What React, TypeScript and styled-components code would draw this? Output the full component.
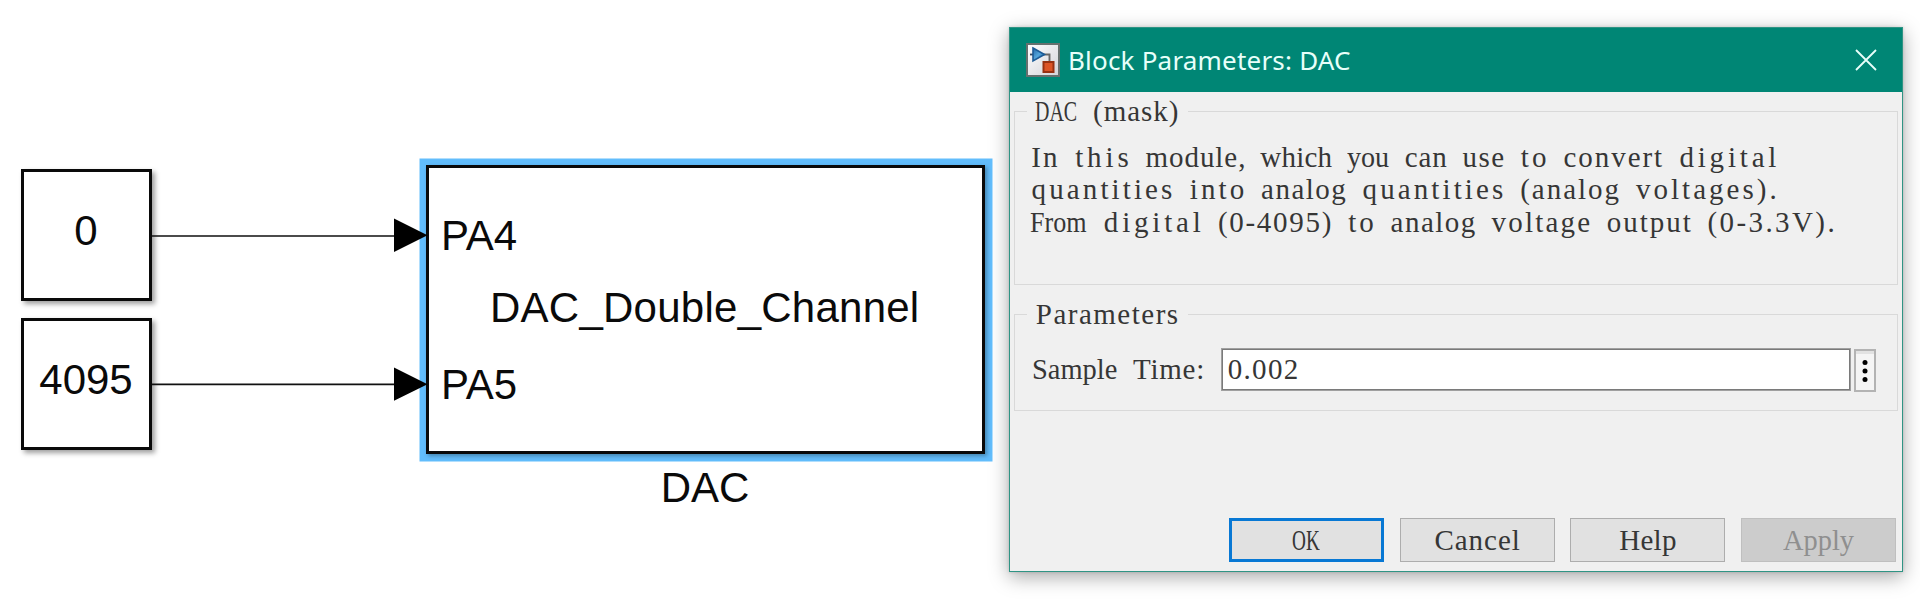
import React from "react";
import styled, { createGlobalStyle } from "styled-components";

const GlobalStyle = createGlobalStyle`
  * { box-sizing: border-box; }
  body { margin: 0; background: #fff; overflow: hidden; }
`;

const SANS = '"Liberation Sans", Arial, sans-serif';
const SERIF = '"Liberation Serif", "Times New Roman", serif';
const CELL = 14.39;
const DIALOG_FONT_SIZE = 29;

/* ---------- text set in equal cells per word ---------- */

const context = document.createElement("canvas").getContext("2d")!;

// Narrow words are spread over their cells, wide ones are condensed into them.
function fitToCells(word: string): React.CSSProperties {
  context.font = `${DIALOG_FONT_SIZE}px ${SERIF}`;
  const natural = context.measureText(word).width;
  const target = word.length * CELL;
  if (natural > target) {
    return { display: "inline-block", width: target, transform: `scaleX(${(target - 1) / natural})` };
  }
  const spacing = (target - natural) / word.length;
  return { letterSpacing: spacing, paddingLeft: spacing / 2, marginRight: -spacing / 2 };
}

const CellLine = styled.span`
  display: block;
  white-space: pre;
  font-family: ${SERIF};
  font-size: ${DIALOG_FONT_SIZE}px;
  word-spacing: ${CELL - DIALOG_FONT_SIZE * 0.25}px;
`;

const Word = styled.span`
  transform-origin: left center;
`;

function CellText({ children }: { children: string }) {
  const words = children.split(" ");
  return (
    <CellLine>
      {words.map((word, i) => (
        <React.Fragment key={i}>
          {i > 0 && " "}
          <Word style={fitToCells(word)}>{word}</Word>
        </React.Fragment>
      ))}
    </CellLine>
  );
}

/* ---------- page ---------- */

const Page = styled.main`
  display: flex;
  width: 1920px;
  height: 605px;
  background: #fff;
`;

const Canvas = styled.section`
  position: relative;
  flex: 0 0 1009px;
  font-family: ${SANS};
  font-size: 42px;
  color: #0a0a0a;
`;

const Block = styled.div<{ $x: number; $y: number; $w: number; $h: number; $selected?: boolean }>`
  position: absolute;
  left: ${(p) => p.$x}px;
  top: ${(p) => p.$y}px;
  width: ${(p) => p.$w}px;
  height: ${(p) => p.$h}px;
  border: 3px solid #0a0a0a;
  background: #fff;
  box-shadow: ${(p) =>
    p.$selected
      ? "2px 2px 4px rgba(0,0,0,.3), 0.5px 0.5px 0 7px #62bdfc"
      : "3px 3px 5px rgba(0,0,0,.38)"};
`;

const ConstantBlock = styled(Block)`
  display: flex;
  align-items: center;
  justify-content: center;
  padding: 0 1px 8px 0;
`;

const DacBody = styled(Block)`
  display: flex;
  flex-direction: column;
  padding: 44px 13px 0 12px;
  line-height: 48px;
`;

const PortName = styled.div`
  letter-spacing: -0.1px;
`;

const MaskText = styled.div`
  margin: 24px 0 29px;
  padding-left: 49px;
  letter-spacing: 0.25px;
  white-space: nowrap;
`;

const BlockName = styled.div`
  position: absolute;
  left: 426px;
  top: 464px;
  width: 558px;
  text-align: center;
  line-height: 48px;
`;

const Wires = styled.svg`
  position: absolute;
  left: 0;
  top: 0;
`;

/* ---------- dialog ---------- */

const Dialog = styled.section`
  display: flex;
  flex-direction: column;
  flex: 0 0 894px;
  height: 545px;
  margin-top: 27px;
  border: 1.5px solid #2f9484;
  background: #f0f0f0;
  color: #363636;
  box-shadow: 0 5px 18px rgba(0, 0, 0, 0.34), 0 0 3px rgba(0, 0, 0, 0.15);
`;

const TitleBar = styled.header`
  display: flex;
  align-items: center;
  flex: 0 0 64px;
  padding: 0 25px 0 16px;
  background: #008675;
  color: #e8fffa;
`;

const Title = styled.h1`
  flex: 1;
  margin: 0 0 0 8px;
  font: 400 26px/36px "Noto Sans", "Open Sans", sans-serif;
  letter-spacing: 0.2px;
`;

const Group = styled.fieldset<{ $height: number; $gap?: number }>`
  height: ${(p) => p.$height}px;
  margin: ${(p) => p.$gap ?? 0}px 4px 0 4px;
  padding: 0;
  border: 1px solid #d9d9d9;
`;

const Legend = styled.legend`
  width: 161px;
  height: 38px;
  margin-left: 12px;
  padding: 0 0 0 8px;
  line-height: 38px;
`;

const Description = styled.div`
  padding: 11px 0 0 15px;
  line-height: 32.4px;
`;

const Field = styled.div`
  display: flex;
  align-items: flex-start;
  padding: 16px 21px 0 17px;
  line-height: 41px;
`;

const FieldLabel = styled.label`
  flex: 0 0 190px;
`;

const FieldValue = styled.div`
  flex: 1;
  height: 41px;
  padding-left: 4px;
  border: 1.5px solid #7a7a7a;
  outline: 0.5px solid #a0a0a0;
  background: #fff;
  line-height: 39px;
`;

const MoreButton = styled.button`
  display: flex;
  width: 22px;
  height: 43px;
  margin-left: 4px;
  padding: 0;
  align-items: center;
  justify-content: center;
  border: 2px solid #b3b3b3;
  background: linear-gradient(#e2e2e2 0 3px, #f5f5f5 3px);
`;

const Actions = styled.footer`
  display: flex;
  gap: 15.7px;
  justify-content: flex-end;
  margin-top: auto;
  padding: 0 6px 9px 0;
`;

const ActionButton = styled.button<{ $primary?: boolean }>`
  display: flex;
  align-items: center;
  justify-content: center;
  width: 155px;
  height: 44px;
  padding: 0;
  border: ${(p) => (p.$primary ? "3px solid #0878d4" : "1.5px solid #adadad")};
  background: #e1e1e1;
  color: #363636;
  &:disabled {
    border-color: #bfbfbf;
    background: #cccccc;
    color: #8f8f8f;
  }
`;

function BlockIcon() {
  return (
    <svg width="34" height="34" viewBox="0 0 34 34">
      <defs>
        <linearGradient id="paper" x1="0" y1="0" x2="1" y2="1">
          <stop offset="0" stopColor="#ffffff" />
          <stop offset="1" stopColor="#d2d2d8" />
        </linearGradient>
        <linearGradient id="gain" x1="0" y1="0" x2="1" y2="1">
          <stop offset="0" stopColor="#2468a8" />
          <stop offset=".5" stopColor="#52a5dc" />
          <stop offset="1" stopColor="#174f8e" />
        </linearGradient>
      </defs>
      <rect x="1" y="1" width="32" height="32" fill="url(#paper)" stroke="#66706e" strokeWidth="2" />
      <path d="M17 11.5h6.5V20" fill="none" stroke="#686868" strokeWidth="1.9" />
      <path d="M4 11.5h3" stroke="#36495f" strokeWidth="1.8" />
      <path d="M7 5l11.5 6.5L7 18z" fill="url(#gain)" stroke="#1d5b96" strokeWidth="1.6" />
      <rect x="17.5" y="19" width="10" height="10" fill="#dc5426" stroke="#973112" strokeWidth="2" />
    </svg>
  );
}

export default function App() {
  return (
    <Page>
      <GlobalStyle />
      <Canvas>
        <ConstantBlock $x={21} $y={169} $w={131} $h={132}>0</ConstantBlock>
        <ConstantBlock $x={21} $y={318} $w={131} $h={132}>4095</ConstantBlock>
        <DacBody $x={426} $y={165} $w={559} $h={289} $selected>
          <PortName>PA4</PortName>
          <MaskText>DAC_Double_Channel</MaskText>
          <PortName>PA5</PortName>
        </DacBody>
        <BlockName>DAC</BlockName>
        <Wires width="1009" height="605">
          <path d="M152 236H396M152 384.4H396" stroke="#111" strokeWidth="1.7" />
          <path d="M394 218.5L427.5 235.3L394 252zM394 367.5L427.5 384.2L394 400.7z" fill="#000" />
        </Wires>
      </Canvas>
      <Dialog>
        <TitleBar>
          <BlockIcon />
          <Title>Block Parameters: DAC</Title>
          <svg width="22" height="22" viewBox="0 0 22 22">
            <path d="M1 1L21 21M21 1L1 21" stroke="#eafffb" strokeWidth="1.8" />
          </svg>
        </TitleBar>
        <Group $height={193}>
          <Legend><CellText>DAC (mask)</CellText></Legend>
          <Description>
            <CellText>In this module, which you can use to convert digital</CellText>
            <CellText>quantities into analog quantities (analog voltages).</CellText>
            <CellText>From digital (0-4095) to analog voltage output (0-3.3V).</CellText>
          </Description>
        </Group>
        <Group $height={116} $gap={10}>
          <Legend><CellText>Parameters</CellText></Legend>
          <Field>
            <FieldLabel><CellText>Sample Time:</CellText></FieldLabel>
            <FieldValue><CellText>0.002</CellText></FieldValue>
            <MoreButton aria-label="More options">
              <svg width="6" height="24" viewBox="0 0 6 24">
                <circle cx="3" cy="3.4" r="2.5" />
                <circle cx="3" cy="12" r="2.5" />
                <circle cx="3" cy="20.6" r="2.5" />
              </svg>
            </MoreButton>
          </Field>
        </Group>
        <Actions>
          <ActionButton $primary><CellText>OK</CellText></ActionButton>
          <ActionButton><CellText>Cancel</CellText></ActionButton>
          <ActionButton><CellText>Help</CellText></ActionButton>
          <ActionButton disabled><CellText>Apply</CellText></ActionButton>
        </Actions>
      </Dialog>
    </Page>
  );
}
